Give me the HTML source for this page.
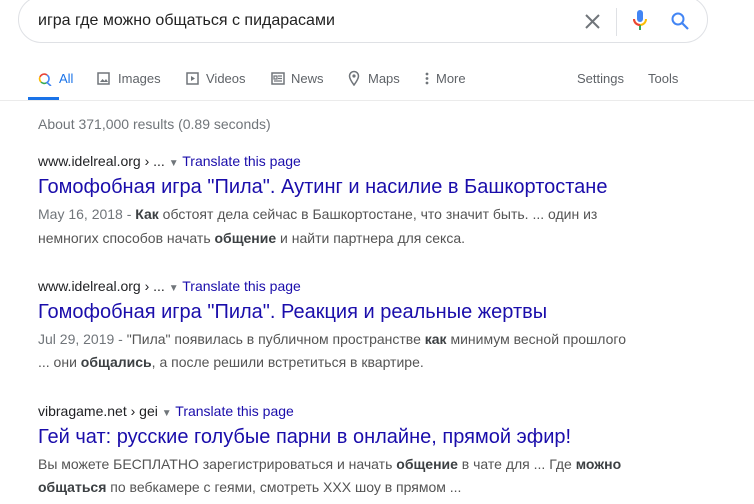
<html><head><style>
body{margin:0;width:754px;height:504px;overflow:hidden;background:#fff;font-family:"Liberation Sans",Arial,sans-serif;position:relative}
.a{position:absolute;white-space:nowrap}
.box{left:18px;top:-4px;width:690px;height:47px;border:1px solid #dfe1e5;border-radius:24px;box-sizing:border-box}
.tab{font-size:13px;color:#5f6368;top:71px}
.url{font-size:14px;color:#202124}
.url span{color:#1a0dab}
.t{font-size:20px;color:#1a0dab}
.s{font-size:14px;color:#545454;line-height:23px}
.s b{color:#3c4043}
</style></head><body>
<div class="a box"></div>
<div class="a" style="left:38px;top:12px;font-size:16px;color:#222">игра где можно общаться с пидарасами</div>
<svg class="a" style="left:584px;top:13px" width="17" height="17" viewBox="0 0 17 17"><path d="M2 2L15 15M15 2L2 15" stroke="#70757a" stroke-width="2"/></svg>
<div class="a" style="left:616px;top:8px;width:1px;height:28px;background:#dfe1e5"></div>
<svg class="a" style="left:632px;top:9px" width="16" height="24" viewBox="0 0 16 24"><rect x="5" y="1" width="6" height="12" rx="3" fill="#4285f4"/><path d="M2 10a6 6 0 0 0 12 0" fill="none" stroke="#fbbc05" stroke-width="2"/><path d="M8 16v5" stroke="#34a853" stroke-width="2"/><path d="M2 10a6 6 0 0 0 6 6" fill="none" stroke="#ea4335" stroke-width="2"/></svg>
<svg class="a" style="left:670px;top:11px" width="20" height="20" viewBox="0 0 20 20"><circle cx="8" cy="8" r="5.5" fill="none" stroke="#4285f4" stroke-width="2"/><path d="M12 12l6 6" stroke="#4285f4" stroke-width="2.2"/></svg>
<svg class="a" style="left:38px;top:72px" width="14" height="14" viewBox="0 0 14 14"><path d="M9 3A4.5 4.5 0 0 0 2 5" fill="none" stroke="#ea4335" stroke-width="1.6"/><path d="M2 5a4.5 4.5 0 0 0 1 5" fill="none" stroke="#fbbc05" stroke-width="1.6"/><path d="M3 10a4.5 4.5 0 0 0 6 .5" fill="none" stroke="#34a853" stroke-width="1.6"/><path d="M9 3a4.5 4.5 0 0 1 0 7.5L13 14" fill="none" stroke="#4285f4" stroke-width="1.6"/></svg>
<div class="a tab" style="left:59px;color:#1a73e8">All</div>
<div class="a" style="left:28px;top:97px;width:31px;height:3px;background:#1a73e8"></div>
<div class="a" style="left:0;top:100px;width:754px;height:1px;background:#ebebeb"></div>
<svg class="a" style="left:97px;top:72px" width="13" height="13"><rect x="1" y="1" width="11" height="11" fill="none" stroke="#70757a" stroke-width="1.5"/><path d="M3 10l2.5-3 2 2 1.5-2 2 3z" fill="#70757a"/></svg>
<div class="a tab" style="left:118px">Images</div>
<svg class="a" style="left:186px;top:72px" width="13" height="13"><rect x="1" y="1" width="11" height="11" fill="none" stroke="#70757a" stroke-width="1.5"/><path d="M5 4v5l4-2.5z" fill="#70757a"/></svg>
<div class="a tab" style="left:206px">Videos</div>
<svg class="a" style="left:271px;top:72px" width="14" height="13"><rect x="1" y="1" width="12" height="11" fill="none" stroke="#70757a" stroke-width="1.5"/><path d="M3 4h3v3H3zM7 4h4M7 6.5h4M3 9h8" stroke="#70757a" stroke-width="1.2" fill="none"/></svg>
<div class="a tab" style="left:291px">News</div>
<svg class="a" style="left:348px;top:70px" width="12" height="16"><path d="M6 15C3 11 1.5 8.5 1.5 6a4.5 4.5 0 0 1 9 0c0 2.5-1.5 5-4.5 9z" fill="none" stroke="#70757a" stroke-width="1.5"/><circle cx="6" cy="6" r="1.6" fill="#70757a"/></svg>
<div class="a tab" style="left:368px">Maps</div>
<svg class="a" style="left:425px;top:72px" width="4" height="13"><circle cx="2" cy="2" r="1.4" fill="#70757a"/><circle cx="2" cy="6.5" r="1.4" fill="#70757a"/><circle cx="2" cy="11" r="1.4" fill="#70757a"/></svg>
<div class="a tab" style="left:436px">More</div>
<div class="a tab" style="left:577px">Settings</div>
<div class="a tab" style="left:648px">Tools</div>
<div class="a" style="left:38px;top:116px;font-size:14px;color:#70757a">About 371,000 results (0.89 seconds)</div>

<div class="a url" style="left:38px;top:153px">www.idelreal.org › ... <span style="color:#70757a;font-size:10px">▼</span> <span>Translate this page</span></div>
<div class="a t" style="left:38px;top:176px">Гомофобная игра "Пила". Аутинг и насилие в Башкортостане</div>
<div class="a s" style="left:38px;top:202px;line-height:24px"><span style="color:#70757a">May 16, 2018 - </span><b>Как</b> обстоят дела сейчас в Башкортостане, что значит быть. ... один из<br>немногих способов начать <b>общение</b> и найти партнера для секса.</div>

<div class="a url" style="left:38px;top:278px">www.idelreal.org › ... <span style="color:#70757a;font-size:10px">▼</span> <span>Translate this page</span></div>
<div class="a t" style="left:38px;top:301px">Гомофобная игра "Пила". Реакция и реальные жертвы</div>
<div class="a s" style="left:38px;top:328px"><span style="color:#70757a">Jul 29, 2019 - </span>"Пила" появилась в публичном пространстве <b>как</b> минимум весной прошлого<br>... они <b>общались</b>, а после решили встретиться в квартире.</div>

<div class="a url" style="left:38px;top:403px">vibragame.net › gei <span style="color:#70757a;font-size:10px">▼</span> <span>Translate this page</span></div>
<div class="a t" style="left:38px;top:426px">Гей чат: русские голубые парни в онлайне, прямой эфир!</div>
<div class="a s" style="left:38px;top:453px">Вы можете БЕСПЛАТНО зарегистрироваться и начать <b>общение</b> в чате для ... Где <b>можно</b><br><b>общаться</b> по вебкамере с геями, смотреть XXX шоу в прямом ...</div>
</body></html>
